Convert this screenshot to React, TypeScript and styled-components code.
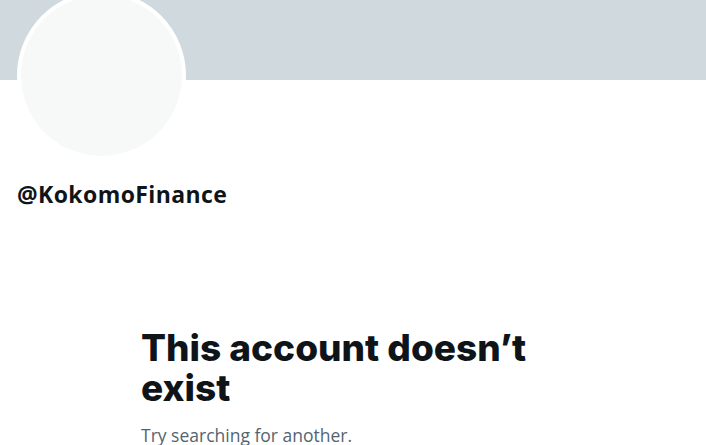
import React from 'react'
import styled, { createGlobalStyle } from 'styled-components'

const GlobalStyle = createGlobalStyle`
    html, body {
        margin: 0;
        padding: 0;
        background: #ffffff;
        overflow: hidden;
    }
    body {
        font-family: 'Open Sans', 'Noto Sans', sans-serif;
        color: #0f1419;
    }
`

const Page = styled.div`
    width: 706px;
    height: 445px;
    overflow: hidden;
    display: flex;
    flex-direction: column;
`

const Banner = styled.div`
    height: 80px;
    flex-shrink: 0;
    background: #cfd9de;
`

const ProfileHead = styled.div`
    padding-left: 17px;
    display: flex;
    flex-direction: column;
    align-items: flex-start;
`

const Avatar = styled.div`
    width: 161px;
    height: 161px;
    margin-top: -89px;
    border-radius: 50%;
    background: #f7f9f9;
    border: 4px solid #ffffff;
`

const Handle = styled.div`
    margin-top: 20px;
    font-family: 'Open Sans', sans-serif;
    font-weight: 700;
    font-size: 23px;
    line-height: 28px;
    letter-spacing: 0.4px;
`

const EmptyState = styled.div`
    margin: 120px 0 0 141px;
    width: 430px;
`

const Title = styled.h1`
    margin: 0;
    font-family: 'Inter', sans-serif;
    font-weight: 800;
    font-size: 37px;
    line-height: 40px;
`

const Subtitle = styled.p`
    margin: 15px 0 0;
    font-family: 'Open Sans', sans-serif;
    font-size: 17.5px;
    line-height: 24px;
    color: #536471;
`

export default function App() {
    return (
        <Page>
            <GlobalStyle />
            <Banner />
            <ProfileHead>
                <Avatar />
                <Handle>@KokomoFinance</Handle>
            </ProfileHead>
            <EmptyState>
                <Title>This account doesn’t exist</Title>
                <Subtitle>Try searching for another.</Subtitle>
            </EmptyState>
        </Page>
    )
}
